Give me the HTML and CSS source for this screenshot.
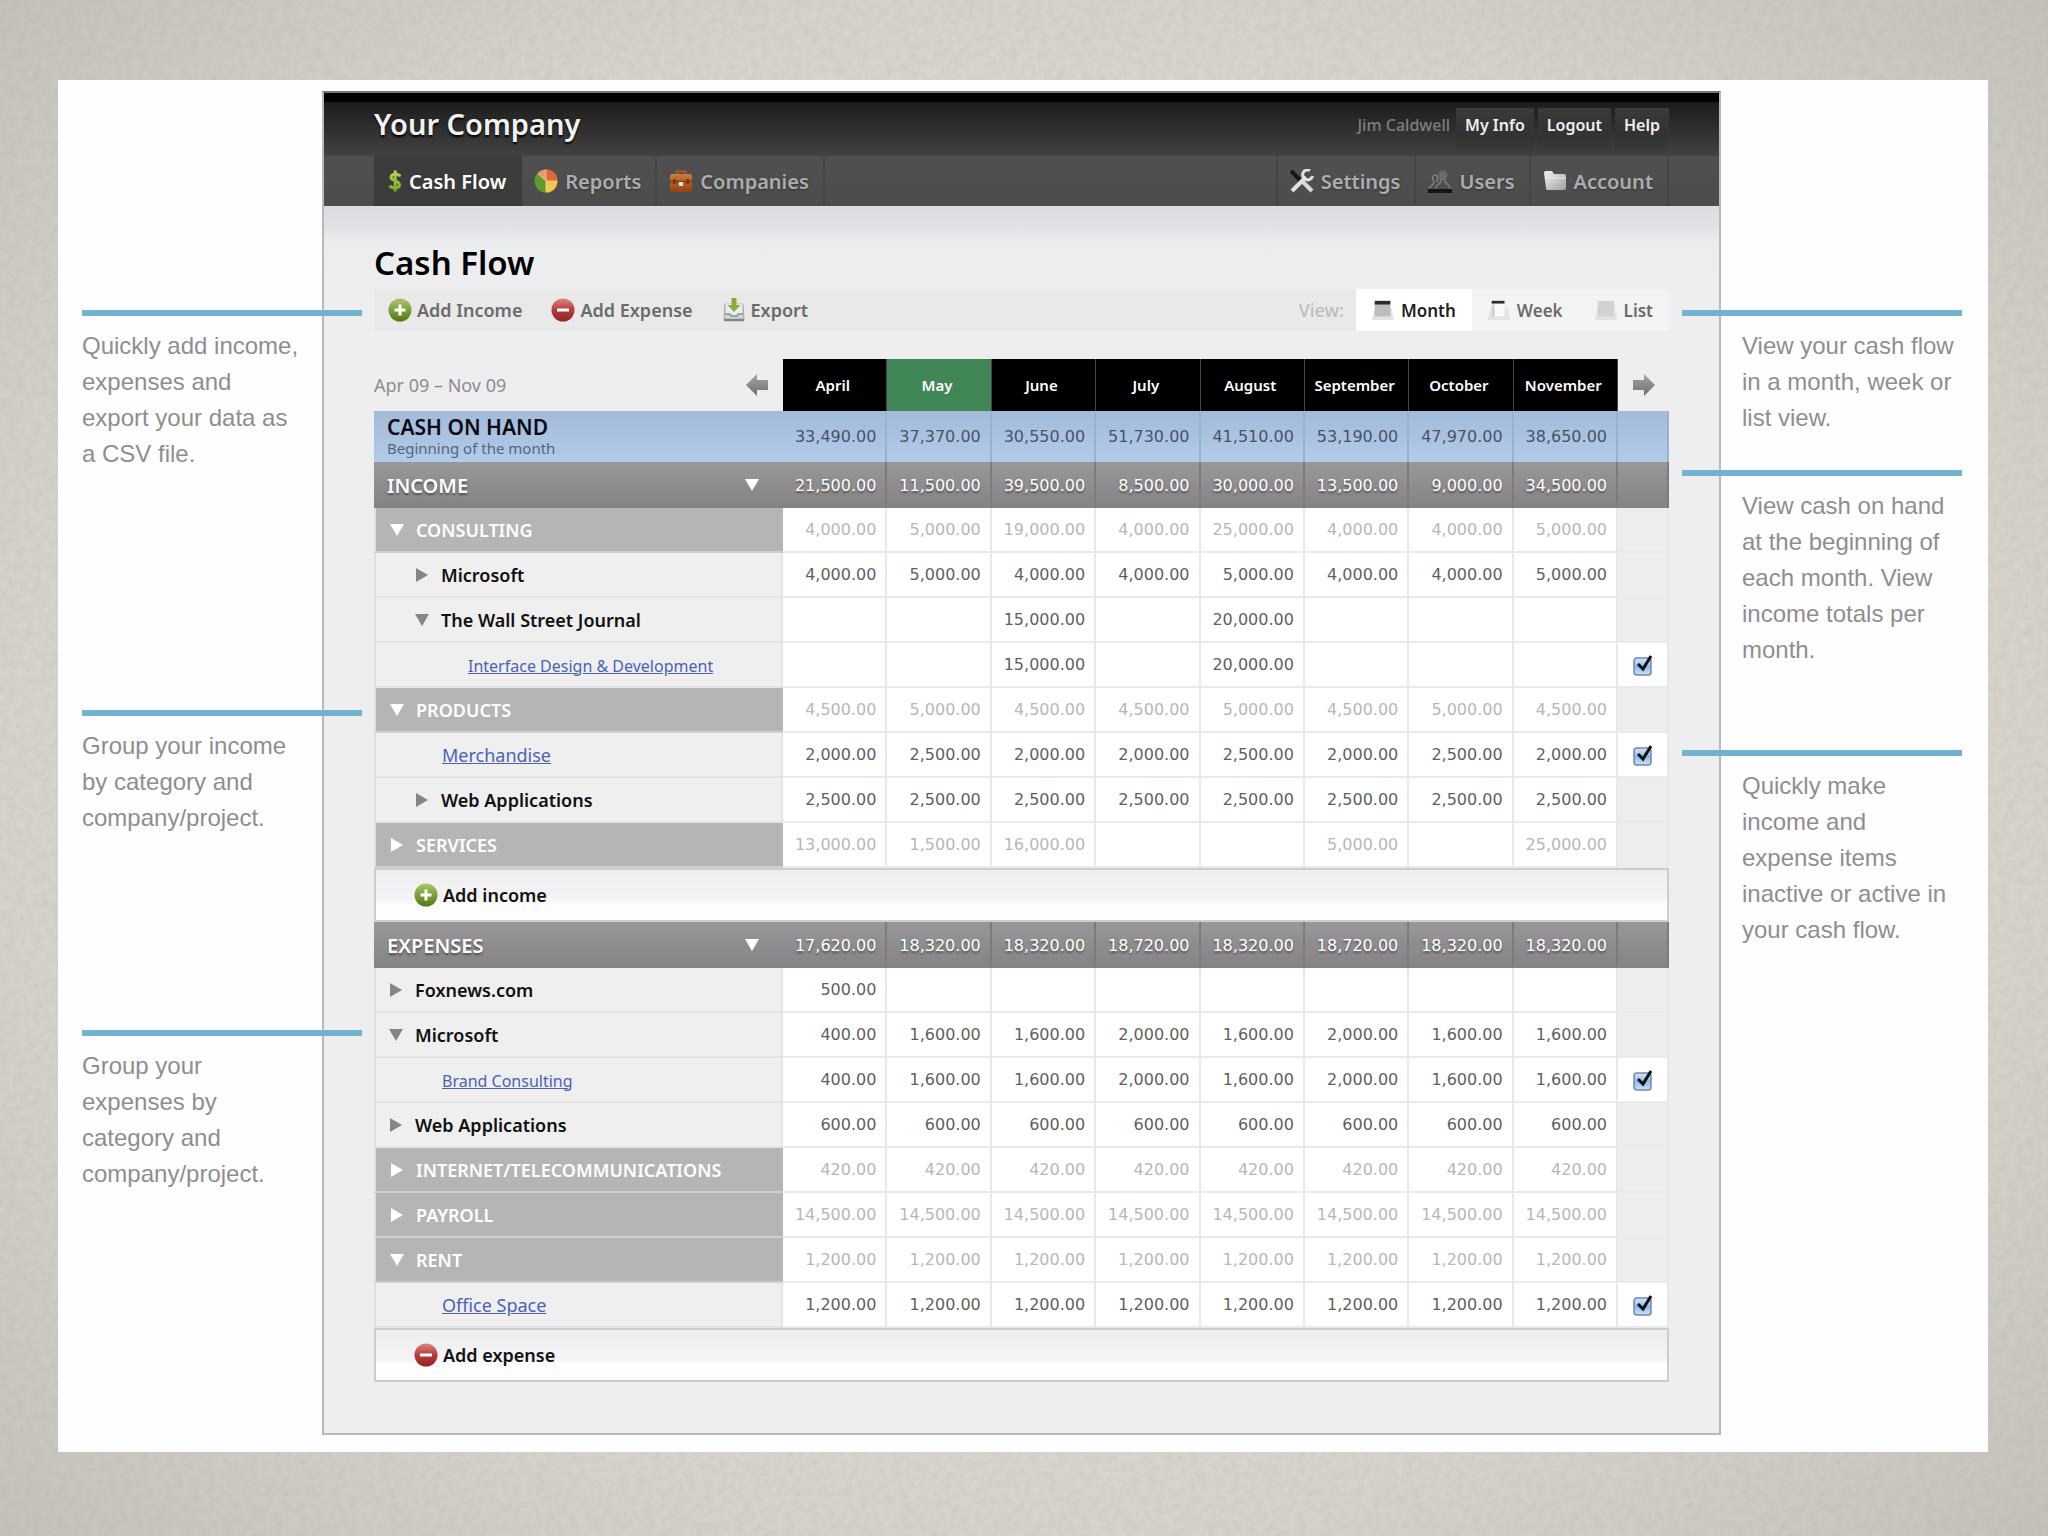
FILE: index.html
```html
<!DOCTYPE html>
<html lang="en">
<head>
<meta charset="utf-8">
<title>Cash Flow</title>
<link rel="stylesheet" href="styles.css">
</head>
<body>
<svg class="sprite" aria-hidden="true">
  <defs>
    <linearGradient id="g-green" x1="0" y1="0" x2="0" y2="1"><stop offset="0" stop-color="#a9c86a"/><stop offset="1" stop-color="#4d7a10"/></linearGradient>
    <linearGradient id="g-red" x1="0" y1="0" x2="0" y2="1"><stop offset="0" stop-color="#dd8580"/><stop offset="0.5" stop-color="#b83a3a"/><stop offset="1" stop-color="#952222"/></linearGradient>
    <linearGradient id="g-gray" x1="0" y1="0" x2="0" y2="1"><stop offset="0" stop-color="#a5a5a5"/><stop offset="1" stop-color="#6f6f6f"/></linearGradient>
    <linearGradient id="g-folder" x1="0" y1="0" x2="1" y2="1"><stop offset="0" stop-color="#f4f4f4"/><stop offset="1" stop-color="#a0a0a0"/></linearGradient>
    <linearGradient id="g-case" x1="0" y1="0" x2="0" y2="1"><stop offset="0" stop-color="#cf7a3c"/><stop offset="1" stop-color="#8f4315"/></linearGradient>
    <linearGradient id="g-dollar" x1="0" y1="0" x2="0" y2="1"><stop offset="0" stop-color="#b9d860"/><stop offset="1" stop-color="#78a81c"/></linearGradient>
  </defs>
  <symbol id="i-plus" viewBox="0 0 24 24"><circle cx="12" cy="12" r="11.500" fill="url(#g-green)"/><path d="M12 6.500v11M6.500 12h11" stroke="#fff" stroke-width="3"/></symbol>
  <symbol id="i-minus" viewBox="0 0 24 24"><circle cx="12" cy="12" r="11.500" fill="url(#g-red)"/><path d="M6 12h12" stroke="#fff" stroke-width="3"/></symbol>
  <symbol id="i-export" viewBox="0 0 24 24"><path d="M3 5h18l1 17H2z" fill="#d4d4d4"/><path d="M4 6v10h4l1 2h6l1-2h4V6" fill="#ececec"/><path d="M3 16h5l1 2h6l1-2h5" fill="none" stroke="#8d8d8d" stroke-width="1.500"/><path d="M3 6L2 22h20L21 6" fill="none" stroke="#a9a9a9"/><path d="M2 22h20" stroke="#858585" stroke-width="2.500"/><path d="M9.500 0h5v7h4L12 14 5.500 7h4z" fill="#86ad3b"/></symbol>
  <symbol id="i-dollar" viewBox="0 0 14 24"><path d="M12 7.500C11 5 3 4 3 8.200c0 4 8.500 3 8.500 7.600 0 4.200-8 3.800-9.800.6M7.200 1.500v21" fill="none" stroke="url(#g-dollar)" stroke-width="3"/></symbol>
  <symbol id="i-pie" viewBox="0 0 24 24"><circle cx="12" cy="12" r="11.500" fill="#5d9a30"/><path d="M12 12L3.500 4.500A11.500 11.500 0 0 1 12 .5z" fill="#e39a68"/><path d="M12 .5A11.500 11.500 0 0 1 23.500 12H12z" fill="#e5653c"/><path d="M12 12h11.500A11.500 11.500 0 0 1 12 23.500z" fill="#f5c64e"/><path d="M12 1v22M12 12h11M12 12L4 5" stroke="#f3dfb5" stroke-width="1" opacity=".7"/></symbol>
  <symbol id="i-case" viewBox="0 0 24 24"><path d="M7.500 6V2.500h9V6" fill="none" stroke="#a85a28" stroke-width="2"/><rect x="1" y="5" width="22" height="18" rx="2" fill="url(#g-case)"/><path d="M1 12.500h22" stroke="#7c3b14" stroke-width="1.500"/><rect x="4" y="10" width="3" height="5" fill="#7c3b14"/><rect x="17" y="10" width="3" height="5" fill="#7c3b14"/><rect x="10" y="13" width="4" height="4" fill="#f0e4d4"/></symbol>
  <symbol id="i-tools" viewBox="0 0 24 24"><path d="M1 2l11 11" stroke="#151515" stroke-width="4"/><path d="M13 13l9 9" stroke="#d8d8d8" stroke-width="4"/><path d="M2 22L16 8" stroke="#e2e2e2" stroke-width="4"/><path d="M20 1.500a5 5 0 1 0 2.500 5.500" fill="none" stroke="#e2e2e2" stroke-width="3"/></symbol>
  <symbol id="i-users" viewBox="0 0 24 24"><path d="M1 21c0-5 5-4 5-8-3-4-1-7 1-7s4 3 2 7" fill="none" stroke="#808080" stroke-width="1.500"/><circle cx="15" cy="6" r="4.500" fill="#6b6b6b"/><path d="M13 10h4c-1 6 5 4 6 11M13 10c1 6-5 4-6 11" fill="none" stroke="#7a7a7a" stroke-width="1.500"/><path d="M0 22h24" stroke="#151515" stroke-width="4"/></symbol>
  <symbol id="i-folder" viewBox="0 0 24 24"><path d="M1 4q0-2 2-2h6l2 3h10q2 0 2 2v12q0 2-2 2H4q-1 0-1-2z" fill="url(#g-folder)"/><path d="M3 9h20" stroke="#fff" opacity=".6"/></symbol>
  <symbol id="i-month" viewBox="0 0 24 24"><path d="M3 9h18l3 14H0z" fill="#e2e2e2"/><rect x="3" y="3" width="17" height="16" fill="#bdbdbd"/><rect x="3" y="2" width="17" height="4" fill="#2b2b2b"/></symbol>
  <symbol id="i-week" viewBox="0 0 24 24"><path d="M3 9h18l3 14H0z" fill="#e2e2e2"/><rect x="6" y="4" width="12" height="15" fill="#f9f9f9"/><path d="M6 6v13" stroke="#c4c4c4" stroke-width="2"/><rect x="4" y="2" width="14" height="3" fill="#2b2b2b"/></symbol>
  <symbol id="i-list" viewBox="0 0 24 24"><path d="M3 9h18l3 14H0z" fill="#e2e2e2"/><rect x="3" y="2" width="18" height="17" fill="#d2d2d2"/></symbol>
  <symbol id="i-prev" viewBox="0 0 24 24"><path d="M1 12L12 1v6h11v10H12v6z" fill="url(#g-gray)"/></symbol>
  <symbol id="i-next" viewBox="0 0 24 24"><path d="M23 12L12 1v6H1v10h11v6z" fill="url(#g-gray)"/></symbol>
  <symbol id="i-open" viewBox="0 0 14 14"><path d="M0 1h14L7 13z" fill="currentColor"/></symbol>
  <symbol id="i-shut" viewBox="0 0 14 14"><path d="M1 0l12 7L1 14z" fill="currentColor"/></symbol>
</svg>

<main class="slide">
  <aside class="notes notes-left">
    <p class="note">Quickly add income, expenses and export your data as a CSV file.</p>
    <p class="note">Group your income by category and company/project.</p>
    <p class="note">Group your expenses by category and company/project.</p>
  </aside>

  <section class="app">
    <header class="masthead">
      <div class="company">Your Company</div>
      <nav class="account-links">
        <span class="user">Jim Caldwell</span>
        <a href="#">My Info</a>
        <a href="#">Logout</a>
        <a href="#">Help</a>
      </nav>
    </header>
    <nav class="tabs">
      <a class="tab current" href="#"><svg class="icon narrow"><use href="#i-dollar"/></svg>Cash Flow</a>
      <a class="tab" href="#"><svg class="icon"><use href="#i-pie"/></svg>Reports</a>
      <a class="tab" href="#"><svg class="icon"><use href="#i-case"/></svg>Companies</a>
      <span class="spacer"></span>
      <a class="tab" href="#"><svg class="icon"><use href="#i-tools"/></svg>Settings</a>
      <a class="tab" href="#"><svg class="icon"><use href="#i-users"/></svg>Users</a>
      <a class="tab" href="#"><svg class="icon"><use href="#i-folder"/></svg>Account</a>
    </nav>

    <div class="content">
      <h1>Cash Flow</h1>
      <div class="toolbar">
        <button class="tool" type="button"><svg class="icon"><use href="#i-plus"/></svg>Add Income</button>
        <button class="tool" type="button"><svg class="icon"><use href="#i-minus"/></svg>Add Expense</button>
        <button class="tool" type="button"><svg class="icon"><use href="#i-export"/></svg>Export</button>
        <span class="spacer"></span>
        <span class="view-label">View:</span>
        <button class="view current" type="button"><svg class="icon"><use href="#i-month"/></svg>Month</button>
        <button class="view" type="button"><svg class="icon"><use href="#i-week"/></svg>Week</button>
        <button class="view" type="button"><svg class="icon"><use href="#i-list"/></svg>List</button>
      </div>

      <table class="ledger">
        <colgroup><col class="c-name"><col span="8"><col class="c-check"></colgroup>
        <thead>
          <tr class="months">
            <td class="range"><div class="row"><span>Apr 09 – Nov 09</span><button class="pager" type="button" aria-label="Earlier"><svg class="icon"><use href="#i-prev"/></svg></button></div></td>
            <th scope="col">April</th><th scope="col" class="now">May</th><th scope="col">June</th><th scope="col">July</th><th scope="col">August</th><th scope="col">September</th><th scope="col">October</th><th scope="col">November</th>
            <td class="next"><button class="pager" type="button" aria-label="Later"><svg class="icon"><use href="#i-next"/></svg></button></td>
          </tr>
        </thead>
        <tbody>
          <tr class="cash"><th scope="row">CASH ON HAND<small>Beginning of the month</small></th><td>33,490.00</td><td>37,370.00</td><td>30,550.00</td><td>51,730.00</td><td>41,510.00</td><td>53,190.00</td><td>47,970.00</td><td>38,650.00</td><td></td></tr>
          <tr class="total"><th scope="row"><div class="row">INCOME<button class="toggle" type="button" aria-label="Toggle income"><svg><use href="#i-open"/></svg></button></div></th><td>21,500.00</td><td>11,500.00</td><td>39,500.00</td><td>8,500.00</td><td>30,000.00</td><td>13,500.00</td><td>9,000.00</td><td>34,500.00</td><td></td></tr>
          <tr class="group"><th scope="row"><div class="row"><button class="toggle" type="button" aria-label="Toggle consulting"><svg><use href="#i-open"/></svg></button>CONSULTING</div></th><td>4,000.00</td><td>5,000.00</td><td>19,000.00</td><td>4,000.00</td><td>25,000.00</td><td>4,000.00</td><td>4,000.00</td><td>5,000.00</td><td></td></tr>
          <tr class="item deep"><th scope="row"><div class="row"><button class="toggle" type="button" aria-label="Toggle Microsoft"><svg><use href="#i-shut"/></svg></button>Microsoft</div></th><td>4,000.00</td><td>5,000.00</td><td>4,000.00</td><td>4,000.00</td><td>5,000.00</td><td>4,000.00</td><td>4,000.00</td><td>5,000.00</td><td></td></tr>
          <tr class="item deep"><th scope="row"><div class="row"><button class="toggle" type="button" aria-label="Toggle The Wall Street Journal"><svg><use href="#i-open"/></svg></button>The Wall Street Journal</div></th><td></td><td></td><td>15,000.00</td><td></td><td>20,000.00</td><td></td><td></td><td></td><td></td></tr>
          <tr class="entry deep"><th scope="row"><a class="long" href="#">Interface Design &amp; Development</a></th><td></td><td></td><td>15,000.00</td><td></td><td>20,000.00</td><td></td><td></td><td></td><td class="check"><input type="checkbox" aria-label="Interface Design &amp; Development active" checked></td></tr>
          <tr class="group"><th scope="row"><div class="row"><button class="toggle" type="button" aria-label="Toggle products"><svg><use href="#i-open"/></svg></button>PRODUCTS</div></th><td>4,500.00</td><td>5,000.00</td><td>4,500.00</td><td>4,500.00</td><td>5,000.00</td><td>4,500.00</td><td>5,000.00</td><td>4,500.00</td><td></td></tr>
          <tr class="entry"><th scope="row"><a href="#">Merchandise</a></th><td>2,000.00</td><td>2,500.00</td><td>2,000.00</td><td>2,000.00</td><td>2,500.00</td><td>2,000.00</td><td>2,500.00</td><td>2,000.00</td><td class="check"><input type="checkbox" aria-label="Merchandise active" checked></td></tr>
          <tr class="item deep"><th scope="row"><div class="row"><button class="toggle" type="button" aria-label="Toggle Web Applications"><svg><use href="#i-shut"/></svg></button>Web Applications</div></th><td>2,500.00</td><td>2,500.00</td><td>2,500.00</td><td>2,500.00</td><td>2,500.00</td><td>2,500.00</td><td>2,500.00</td><td>2,500.00</td><td></td></tr>
          <tr class="group"><th scope="row"><div class="row"><button class="toggle" type="button" aria-label="Toggle services"><svg><use href="#i-shut"/></svg></button>SERVICES</div></th><td>13,000.00</td><td>1,500.00</td><td>16,000.00</td><td></td><td></td><td>5,000.00</td><td></td><td>25,000.00</td><td></td></tr>
          <tr class="add"><td colspan="10"><button type="button"><svg class="icon"><use href="#i-plus"/></svg>Add income</button></td></tr>
        </tbody>
        <tbody>
          <tr class="total"><th scope="row"><div class="row">EXPENSES<button class="toggle" type="button" aria-label="Toggle expenses"><svg><use href="#i-open"/></svg></button></div></th><td>17,620.00</td><td>18,320.00</td><td>18,320.00</td><td>18,720.00</td><td>18,320.00</td><td>18,720.00</td><td>18,320.00</td><td>18,320.00</td><td></td></tr>
          <tr class="item"><th scope="row"><div class="row"><button class="toggle" type="button" aria-label="Toggle Foxnews.com"><svg><use href="#i-shut"/></svg></button>Foxnews.com</div></th><td>500.00</td><td></td><td></td><td></td><td></td><td></td><td></td><td></td><td></td></tr>
          <tr class="item"><th scope="row"><div class="row"><button class="toggle" type="button" aria-label="Toggle Microsoft expenses"><svg><use href="#i-open"/></svg></button>Microsoft</div></th><td>400.00</td><td>1,600.00</td><td>1,600.00</td><td>2,000.00</td><td>1,600.00</td><td>2,000.00</td><td>1,600.00</td><td>1,600.00</td><td></td></tr>
          <tr class="entry"><th scope="row"><a class="long" href="#">Brand Consulting</a></th><td>400.00</td><td>1,600.00</td><td>1,600.00</td><td>2,000.00</td><td>1,600.00</td><td>2,000.00</td><td>1,600.00</td><td>1,600.00</td><td class="check"><input type="checkbox" aria-label="Brand Consulting active" checked></td></tr>
          <tr class="item"><th scope="row"><div class="row"><button class="toggle" type="button" aria-label="Toggle Web Applications expenses"><svg><use href="#i-shut"/></svg></button>Web Applications</div></th><td>600.00</td><td>600.00</td><td>600.00</td><td>600.00</td><td>600.00</td><td>600.00</td><td>600.00</td><td>600.00</td><td></td></tr>
          <tr class="group"><th scope="row"><div class="row"><button class="toggle" type="button" aria-label="Toggle internet and telecommunications"><svg><use href="#i-shut"/></svg></button>INTERNET/TELECOMMUNICATIONS</div></th><td>420.00</td><td>420.00</td><td>420.00</td><td>420.00</td><td>420.00</td><td>420.00</td><td>420.00</td><td>420.00</td><td></td></tr>
          <tr class="group"><th scope="row"><div class="row"><button class="toggle" type="button" aria-label="Toggle payroll"><svg><use href="#i-shut"/></svg></button>PAYROLL</div></th><td>14,500.00</td><td>14,500.00</td><td>14,500.00</td><td>14,500.00</td><td>14,500.00</td><td>14,500.00</td><td>14,500.00</td><td>14,500.00</td><td></td></tr>
          <tr class="group"><th scope="row"><div class="row"><button class="toggle" type="button" aria-label="Toggle rent"><svg><use href="#i-open"/></svg></button>RENT</div></th><td>1,200.00</td><td>1,200.00</td><td>1,200.00</td><td>1,200.00</td><td>1,200.00</td><td>1,200.00</td><td>1,200.00</td><td>1,200.00</td><td></td></tr>
          <tr class="entry"><th scope="row"><a href="#">Office Space</a></th><td>1,200.00</td><td>1,200.00</td><td>1,200.00</td><td>1,200.00</td><td>1,200.00</td><td>1,200.00</td><td>1,200.00</td><td>1,200.00</td><td class="check"><input type="checkbox" aria-label="Office Space active" checked></td></tr>
          <tr class="add"><td colspan="10"><button type="button"><svg class="icon"><use href="#i-minus"/></svg>Add expense</button></td></tr>
        </tbody>
      </table>
    </div>
  </section>

  <aside class="notes notes-right">
    <p class="note">View your cash flow in a month, week or list view.</p>
    <p class="note">View cash on hand at the beginning of each month. View income totals per month.</p>
    <p class="note">Quickly make income and expense items inactive or active in your cash flow.</p>
  </aside>
</main>
</body>
</html>
```

FILE: styles.css
```css
* { box-sizing: border-box; }

body {
  margin: 0;
  min-height: 100vh;
  padding: 80px 60px 83px 58px;
  font-family: "Noto Sans", "Open Sans", sans-serif;
  font-size: 18px;
  color: #111;
  background:
    url("data:image/svg+xml,%3Csvg xmlns='http://www.w3.org/2000/svg' width='512' height='512'%3E%3Cfilter id='n'%3E%3CfeTurbulence type='fractalNoise' baseFrequency='.12' numOctaves='4' stitchTiles='stitch'/%3E%3CfeColorMatrix values='0 0 0 0 .4 0 0 0 0 .38 0 0 0 0 .34 .3 0 0 0 -.09'/%3E%3C/filter%3E%3Crect width='512' height='512' filter='url(%23n)'/%3E%3C/svg%3E"),
    radial-gradient(ellipse at center, #dedbd3 40%, #d6d3cb 70%, #c3c1b9 100%);
}

button {
  margin: 0;
  padding: 0;
  border: 0;
  background: none;
  font: inherit;
  color: inherit;
}

a { color: inherit; text-decoration: none; }

.sprite { position: absolute; width: 0; height: 0; }
.icon { width: 24px; height: 24px; flex: none; }
.icon.narrow { width: 14px; }
.spacer { flex: 1; }

.slide {
  display: grid;
  grid-template-columns: 264fr 1399fr 267fr;
  padding: 11px 0 17px;
  background: #fefefe;
}

/* Side notes, each ruled by a line that reaches over the app's edge */
.notes {
  display: grid;
  align-content: start;
  padding-top: 219px;
  z-index: 1;
  font: 24px/36px "Liberation Sans", Arial, sans-serif;
  color: #8e8e90;
}
.notes-left { grid-template-rows: 400px 320px auto; margin: 0 -40px 0 24px; }
.notes-right { grid-template-rows: 160px 280px auto; margin: 0 26px 0 -39px; }
.note { margin: 0; padding-top: 12px; border-top: 6px solid #73b1d1; }
.notes-left .note { padding-right: 59px; }
.notes-right .note { padding-left: 60px; }

.app {
  border: 2px solid #b9b9bd;
  border-top-color: #777;
  background: #eeeef0;
}

.masthead {
  display: flex;
  justify-content: space-between;
  height: 63px;
  padding: 0 50px;
  background: linear-gradient(#000 8px, #1d1d1d 10px, #424242);
}
.company {
  font-size: 29px;
  font-weight: 600;
  line-height: 62px;
  color: #f2f2f2;
  text-shadow: 0 2px 2px #000;
}
.account-links {
  display: flex;
  gap: 4px;
  padding-top: 15px;
  font-size: 16px;
  line-height: 34px;
  color: #f0f0f0;
}
.account-links a { padding: 0 9px; font-weight: 600; background: linear-gradient(#3a3a3a, #333 50%, transparent); }
.user { padding-right: 2px; color: #7e7e7e; font-weight: 500; }

.tabs {
  display: flex;
  height: 50px;
  padding: 0 50px;
  background: linear-gradient(#505050, #4c4c4c);
}
.tab {
  display: flex;
  align-items: center;
  gap: 7px;
  padding: 0 14px 0 12px;
  border-right: 2px solid #454545;
  font-size: 20px;
  font-weight: 600;
  color: #adadad;
  text-shadow: 0 1px 2px #333;
}
.spacer + .tab { border-left: 2px solid #454545; }
.tab.current { padding-left: 14px; background: #3c3c3c; color: #fff; border-color: #3c3c3c; }

.content {
  padding: 33px 50px 51px;
  background: linear-gradient(#dcdde0, #e0e1e4 20px, #ebecee 36px, #eeeef0 80px);
}
h1 { margin: 0 0 2px; font-size: 33px; font-weight: 600; line-height: 48px; color: #000; }

.toolbar {
  display: flex;
  height: 42px;
  margin-bottom: 28px;
  background: #e9e9ea;
  color: #6b6b6b;
  font-weight: 600;
}
.tool { display: flex; align-items: center; gap: 5px; margin-left: 14px; margin-right: 15px; }
.view-label { align-self: center; margin-right: 12px; color: #bdbdbd; font-weight: 500; }
.view {
  display: flex;
  align-items: center;
  gap: 7px;
  padding: 0 16px;
  background: #f3f3f4;
  font-size: 17px;
}
.view .icon { width: 22px; }
.view.current { background: #fff; color: #222; }

.ledger {
  width: 100%;
  table-layout: fixed;
  border-collapse: separate;
  border-spacing: 0;
}
.c-name { width: 409px; }
.c-check { width: 51px; }
.ledger tr { height: 45px; }
.ledger th, .ledger td { padding: 0; }
.row { display: flex; align-items: center; }
.toggle { display: flex; margin-right: 12px; }
.toggle svg { width: 14px; height: 14px; }

.months th { background: #000; color: #fff; font-size: 15px; font-weight: 600; }
.ledger .months { height: 52px; }
.ledger .months th { padding-right: 4px; border-right: 1px solid #444; }
.ledger .months .now { background: #418656; }
.range { font-size: 18px; color: #8d8d8d; }
.range .row { justify-content: space-between; padding-right: 14px; }
.pager { display: flex; }
.next .pager { margin: 0 auto; }

tbody th {
  border-left: 2px solid #dfdfe2;
  text-align: left;
  font-weight: 600;
}
tbody td {
  border-right: 2px solid #e8e7ea;
  border-bottom: 2px solid #eae9ec;
  background: #fff;
  font-family: "DejaVu Sans", Verdana, sans-serif;
  font-size: 16px;
  color: #5f5f5f;
  text-align: right;
}
.ledger tbody td { padding-right: 9px; }
.ledger tbody td:last-child { padding-right: 0; background: #ededee; text-align: center; }

.ledger .cash { height: 51px; }
.cash th, .cash td, .ledger .cash td:last-child { background: linear-gradient(#a3bad8, #b2cbe9); border-bottom: 0; border-color: #9ab1cf; color: #46536a; }
.ledger .cash th { padding-left: 13px; font-size: 21px; line-height: 22px; color: #080c12; }
.cash small { display: block; font-size: 15px; font-weight: 400; line-height: 20px; color: #56657c; }

.ledger .total { height: 46px; }
.total th, .total td, .ledger .total td:last-child { background: linear-gradient(#999799, #848284); border-bottom: 0; border-color: #7d7b7d; color: #fff; text-shadow: 0 2px 2px #555; }
.ledger .total th { padding-left: 13px; font-size: 20px; }
.total .row { justify-content: space-between; }
.total .toggle { margin-right: 24px; }
.cash th, .total th { border-left-width: 0; }

.group th { background: #b5b5b5; border-bottom: 2px solid #cfcfcf; color: #fff; }
.group td { color: #b7b7b9; }
.ledger .group th { padding-left: 14px; }

.item th, .entry th { background: #efeff0; border-bottom: 2px solid #e4e4e6; border-right: 2px solid #e4e4e6; }
.item .toggle { color: #858585; }
.ledger .item th { padding-left: 13px; }
.ledger .item.deep th { padding-left: 39px; }
.ledger .entry th { padding-left: 66px; font-weight: 400; }
.ledger .entry.deep th { padding-left: 92px; }
.entry a { color: #4a62b5; text-decoration: underline; }
.entry .long { font-size: 16px; }
.ledger .entry .check { background: #fff; }

input[type="checkbox"] {
  appearance: none;
  display: block;
  width: 24px;
  height: 24px;
  margin: 0 auto;
  background: url("data:image/svg+xml,%3Csvg xmlns='http://www.w3.org/2000/svg' viewBox='0 0 24 24'%3E%3ClinearGradient id='g' x2='0' y2='1'%3E%3Cstop stop-color='%23dbe8fa'/%3E%3Cstop offset='.5' stop-color='%2393b7e8'/%3E%3Cstop offset='1' stop-color='%23c9e4fb'/%3E%3C/linearGradient%3E%3Crect x='3' y='5' width='17' height='17' rx='3' fill='url(%23g)' stroke='%237088b5' stroke-width='1.500'/%3E%3Cpath d='M7 11l5 5L20 3' fill='none' stroke='%23111' stroke-width='3'/%3E%3C/svg%3E") center / contain no-repeat;
}

.ledger .add { height: 54px; }
.ledger tbody .add td {
  padding-left: 38px;
  border: 2px solid #cdcdd0;
  background: linear-gradient(#eeeef0, #f3f3f5 55%, #fdfdfe 70%);
  font-family: inherit;
  font-size: 18px;
  text-align: left;
  color: #111;
}
.add button { display: flex; align-items: center; gap: 5px; font-weight: 600; }
```
